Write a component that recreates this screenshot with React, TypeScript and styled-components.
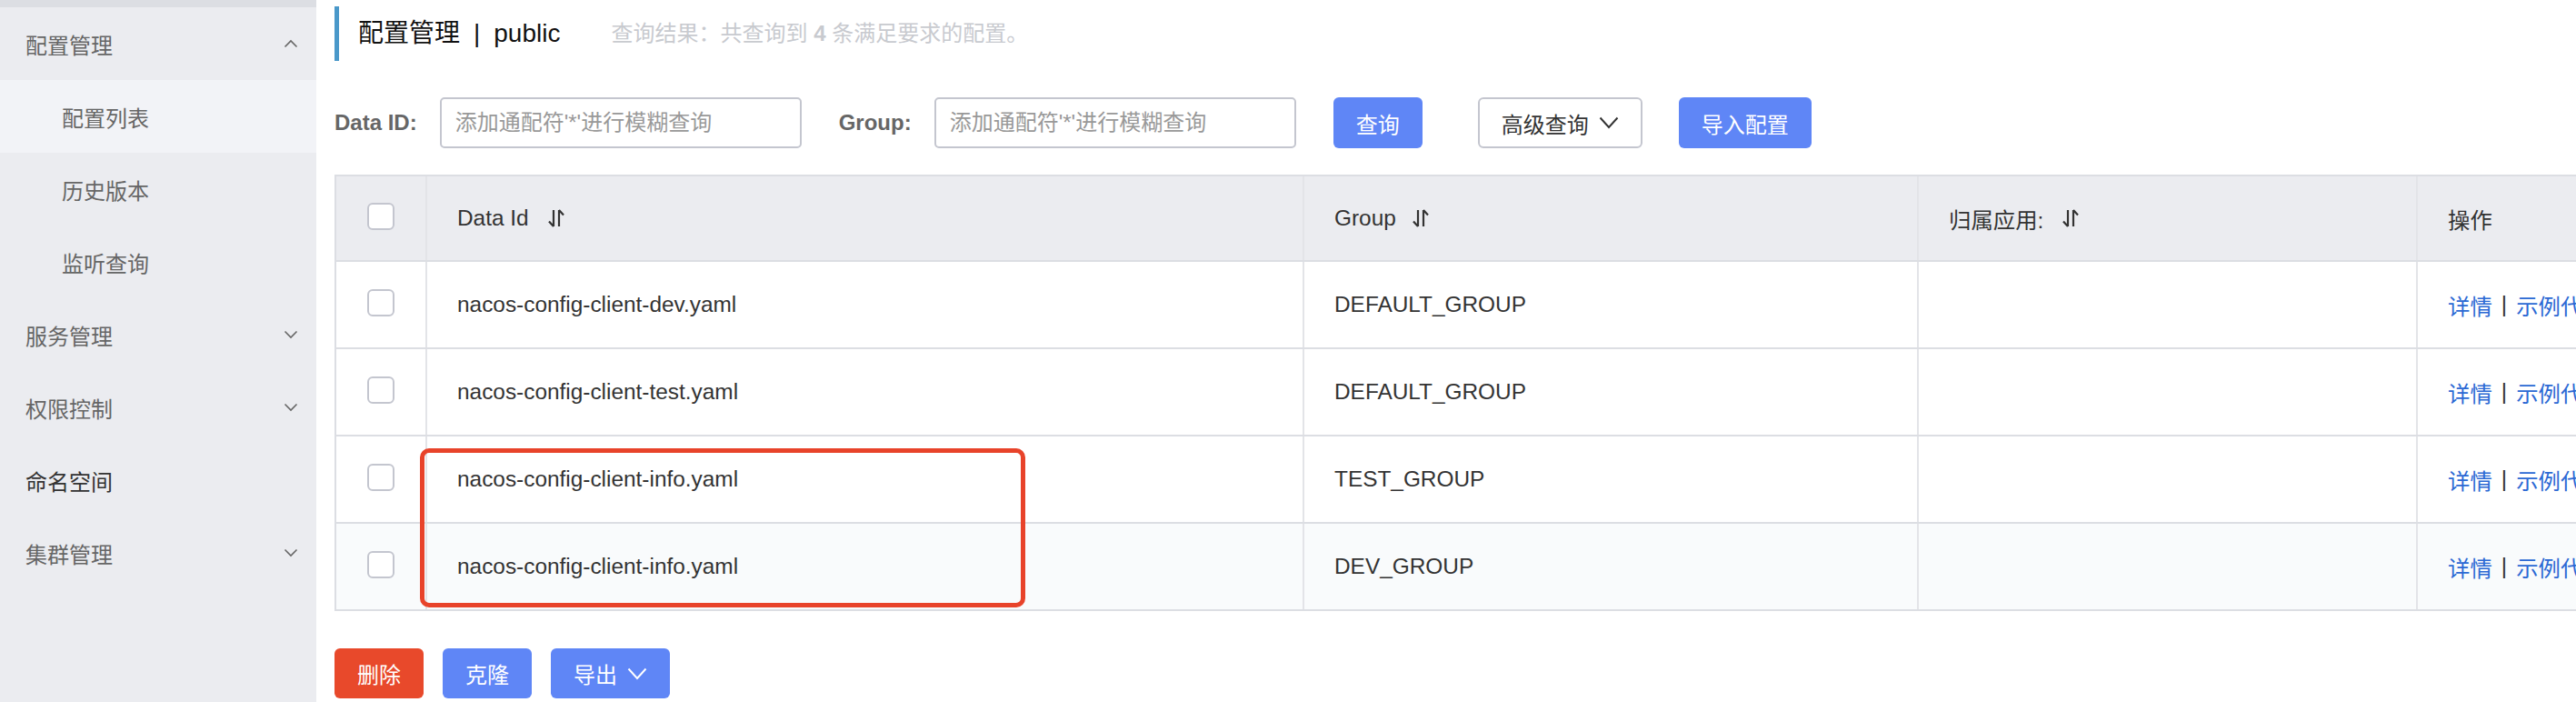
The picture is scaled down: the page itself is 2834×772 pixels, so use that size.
import React from "react";
import styled, { createGlobalStyle } from "styled-components";

const GlobalStyle = createGlobalStyle`
  html, body { margin: 0; padding: 0; background: #fff; }
  body {
    font-family: "Liberation Sans", "Noto Sans CJK SC", sans-serif;
    width: 2834px;
    height: 772px;
    overflow: hidden;
  }
  * { box-sizing: border-box; }
`;

const Page = styled.div`
  display: flex;
  width: 2834px;
  height: 772px;
  overflow: hidden;
`;

/* ---------- Sidebar ---------- */
const Sidebar = styled.nav`
  width: 348px;
  flex: none;
  background: #ebecf0;
  display: flex;
  flex-direction: column;
`;

const SidebarEdge = styled.div`
  height: 8px;
  background: #dcdee3;
`;

const MenuItem = styled.div<{ $sub?: boolean; $active?: boolean; $strong?: boolean }>`
  height: 80px;
  display: flex;
  align-items: center;
  justify-content: space-between;
  padding: 0 20px 0 ${(p) => (p.$sub ? 68 : 28)}px;
  background: ${(p) => (p.$active ? "#f2f3f7" : "transparent")};
  color: ${(p) => (p.$strong ? "#333" : "#666")};
  font-size: 24px;
`;

const MenuLabel = styled.span`
  padding-top: 6px;
  line-height: 30px;
`;

const MenuChevron = styled.svg`
  width: 16px;
  height: 10px;
  flex: none;
`;

/* ---------- Main ---------- */
const Main = styled.main`
  flex: 1;
  min-width: 0;
  padding-left: 20px;
  overflow: hidden;
  background: #fff;
`;

const TitleBar = styled.div`
  margin-top: 7px;
  height: 60px;
  border-left: 5px solid #4a98c9;
  display: flex;
  align-items: center;
  padding-left: 21px;
  white-space: nowrap;
`;

const Title = styled.span`
  font-size: 28px;
  color: #111;
  line-height: 34px;
`;

const TitleSep = styled.span`
  margin: 0 15px;
`;

const ResultText = styled.span`
  margin-left: 56px;
  font-size: 24px;
  color: #c8cacf;
  line-height: 30px;

  b {
    font-weight: bold;
  }
`;

const SearchRow = styled.div`
  margin-top: 40px;
  height: 56px;
  display: flex;
  align-items: center;
  white-space: nowrap;
`;

const FormItem = styled.div`
  display: flex;
  align-items: center;
  margin-right: 41px;
`;

const Label = styled.label`
  font-size: 24px;
  font-weight: bold;
  color: #666;
  margin-right: 25px;
`;

const TextInput = styled.input`
  width: 398px;
  height: 56px;
  border: 2px solid #c4c6cf;
  border-radius: 5px;
  padding: 0 15px;
  font-family: inherit;
  font-size: 24px;
  color: #333;
  outline: none;
  background: #fff;

  &::placeholder {
    color: #999;
  }
`;

const Button = styled.button<{ $variant?: "primary" | "normal" | "danger"; $space?: number; $h?: number }>`
  height: ${(p) => p.$h ?? 56}px;
  padding: 0 ${(p) => (p.$variant === "normal" ? 24 : 25)}px;
  margin-right: ${(p) => p.$space ?? 0}px;
  display: inline-flex;
  align-items: center;
  gap: 11px;
  border-radius: 6px;
  font-family: inherit;
  font-size: 24px;
  cursor: pointer;
  border: ${(p) => (p.$variant === "normal" ? "2px solid #c4c6cf" : "none")};
  background: ${(p) =>
    p.$variant === "danger" ? "#e8492b" : p.$variant === "normal" ? "#fff" : "#5f86f6"};
  color: ${(p) => (p.$variant === "normal" ? "#333" : "#fff")};
`;

const BtnChevron = styled.svg`
  width: 22px;
  height: 14px;
  flex: none;
`;

/* ---------- Table ---------- */
const Table = styled.div`
  position: relative;
  margin-top: 29px;
  width: 2640px;
  border-top: 2px solid #dcdee3;
  border-left: 2px solid #dcdee3;
`;

const Row = styled.div<{ $head?: boolean; $tint?: boolean }>`
  display: grid;
  grid-template-columns: 98px 965px 676px 549px 1fr;
  height: ${(p) => (p.$head ? 94 : 96)}px;
  border-bottom: 2px solid #dcdee3;
  background: ${(p) => (p.$head ? "#ebecf0" : p.$tint ? "#f9fbfc" : "#fff")};
`;

const Cell = styled.div`
  display: flex;
  align-items: center;
  padding-left: 33px;
  border-left: 2px solid #e3e4e8;
  font-size: 24.4px;
  color: #333;
  white-space: nowrap;
  overflow: hidden;

  &:first-child {
    border-left: none;
    padding-left: 0;
    justify-content: center;
  }
`;

const Checkbox = styled.span`
  width: 30px;
  height: 30px;
  border: 2px solid #c4c6cf;
  border-radius: 6px;
  background: #fff;
  margin-bottom: 5px;
`;

const SortIcon = styled.svg<{ $gap?: number }>`
  width: 20px;
  height: 20px;
  margin-left: ${(p) => p.$gap ?? 20}px;
  flex: none;
`;

const Link = styled.a`
  color: #2b69d4;
  text-decoration: none;
`;

const LinkSep = styled.span`
  margin: 0 10px;
  color: #333;
`;

const Highlight = styled.div`
  position: absolute;
  left: 92px;
  top: 299px;
  width: 666px;
  height: 175px;
  border: 5px solid #e8432a;
  border-radius: 10px;
  pointer-events: none;
`;

const Actions = styled.div`
  margin-top: 41px;
  display: flex;
  gap: 21px;
`;

/* ---------- Icons ---------- */
const Chevron = ({ up }: { up?: boolean }) => (
  <MenuChevron viewBox="0 0 16 10">
    <polyline
      points={up ? "1.5,8.5 8,2 14.5,8.5" : "1.5,1.5 8,8 14.5,1.5"}
      fill="none"
      stroke="#666"
      strokeWidth="1.6"
    />
  </MenuChevron>
);

const DownChevron = ({ color }: { color: string }) => (
  <BtnChevron viewBox="0 0 22 14">
    <polyline points="1.5,1.5 11,12 20.5,1.5" fill="none" stroke={color} strokeWidth="2" />
  </BtnChevron>
);

const Sort = ({ gap }: { gap?: number }) => (
  <SortIcon $gap={gap} viewBox="0 0 20 20">
    <path d="M7 1 V19 M7 19 L2 13.5" fill="none" stroke="#333" strokeWidth="2.2" />
    <path d="M13 1 V19 M13 1 L18 6.5" fill="none" stroke="#333" strokeWidth="2.2" />
  </SortIcon>
);

const rows = [
  { id: "nacos-config-client-dev.yaml", group: "DEFAULT_GROUP" },
  { id: "nacos-config-client-test.yaml", group: "DEFAULT_GROUP" },
  { id: "nacos-config-client-info.yaml", group: "TEST_GROUP" },
  { id: "nacos-config-client-info.yaml", group: "DEV_GROUP", tint: true },
];

export default function App() {
  return (
    <>
      <GlobalStyle />
      <Page>
        <Sidebar>
          <SidebarEdge />
          <MenuItem>
            <MenuLabel>配置管理</MenuLabel>
            <Chevron up />
          </MenuItem>
          <MenuItem $sub $active>
            <MenuLabel>配置列表</MenuLabel>
          </MenuItem>
          <MenuItem $sub>
            <MenuLabel>历史版本</MenuLabel>
          </MenuItem>
          <MenuItem $sub>
            <MenuLabel>监听查询</MenuLabel>
          </MenuItem>
          <MenuItem>
            <MenuLabel>服务管理</MenuLabel>
            <Chevron />
          </MenuItem>
          <MenuItem>
            <MenuLabel>权限控制</MenuLabel>
            <Chevron />
          </MenuItem>
          <MenuItem $strong>
            <MenuLabel>命名空间</MenuLabel>
          </MenuItem>
          <MenuItem>
            <MenuLabel>集群管理</MenuLabel>
            <Chevron />
          </MenuItem>
        </Sidebar>

        <Main>
          <TitleBar>
            <Title>
              配置管理<TitleSep>|</TitleSep>public
            </Title>
            <ResultText>
              查询结果：共查询到 <b>4</b> 条满足要求的配置。
            </ResultText>
          </TitleBar>

          <SearchRow>
            <FormItem>
              <Label>Data ID:</Label>
              <TextInput placeholder="添加通配符'*'进行模糊查询" />
            </FormItem>
            <FormItem>
              <Label>Group:</Label>
              <TextInput placeholder="添加通配符'*'进行模糊查询" />
            </FormItem>
            <Button $variant="primary" $space={61}>查询</Button>
            <Button $variant="normal" $space={40}>
              高级查询
              <DownChevron color="#333" />
            </Button>
            <Button $variant="primary">导入配置</Button>
          </SearchRow>

          <Table>
            <Row $head>
              <Cell>
                <Checkbox />
              </Cell>
              <Cell>
                Data Id
                <Sort gap={20} />
              </Cell>
              <Cell>
                Group
                <Sort gap={17} />
              </Cell>
              <Cell>
                归属应用:
                <Sort gap={20} />
              </Cell>
              <Cell>操作</Cell>
            </Row>
            {rows.map((r, i) => (
              <Row key={i} $tint={r.tint}>
                <Cell>
                  <Checkbox />
                </Cell>
                <Cell>{r.id}</Cell>
                <Cell>{r.group}</Cell>
                <Cell />
                <Cell>
                  <Link>详情</Link>
                  <LinkSep>|</LinkSep>
                  <Link>示例代码</Link>
                  <LinkSep>|</LinkSep>
                  <Link>编辑</Link>
                </Cell>
              </Row>
            ))}
            <Highlight />
          </Table>

          <Actions>
            <Button $variant="danger" $h={55}>删除</Button>
            <Button $variant="primary" $h={55}>克隆</Button>
            <Button $variant="primary" $h={55}>
              导出
              <DownChevron color="#fff" />
            </Button>
          </Actions>
        </Main>
      </Page>
    </>
  );
}
